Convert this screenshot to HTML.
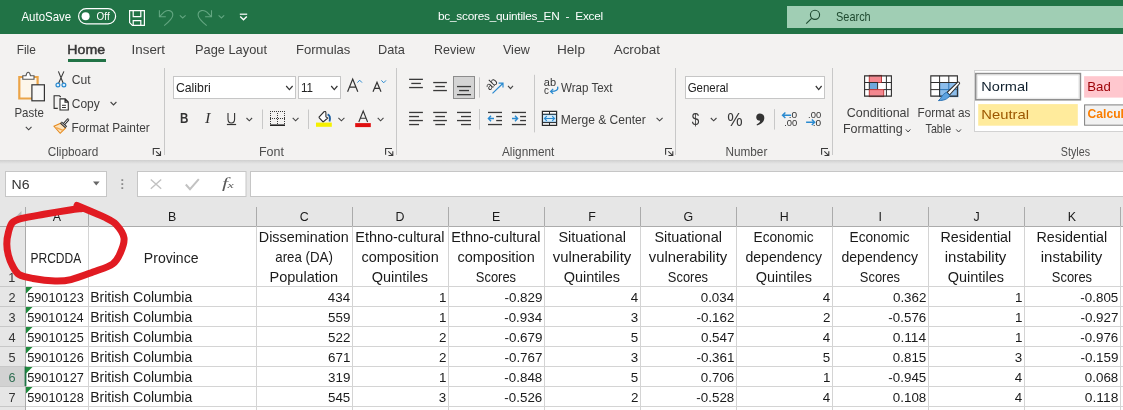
<!DOCTYPE html>
<html><head><meta charset="utf-8"><title>Excel</title>
<style>html,body{margin:0;padding:0;width:1123px;height:410px;overflow:hidden;background:#fff}
svg{display:block;will-change:transform;font-family:"Liberation Sans",sans-serif}
text{white-space:pre}</style></head>
<body><svg width="1123" height="410" viewBox="0 0 1123 410">
<rect x="0" y="0" width="1123" height="34" fill="#217346" />
<rect x="0" y="34" width="1123" height="126" fill="#F3F2F1" />
<rect x="0" y="160" width="1123" height="250" fill="#E6E6E6" />
<defs><linearGradient id="sh" x1="0" y1="0" x2="0" y2="1"><stop offset="0" stop-color="#cfcfcf"/><stop offset="1" stop-color="#e6e6e6"/></linearGradient></defs>
<rect x="0" y="160" width="1123" height="4" fill="url(#sh)" />
<text x="21.40" y="21.2" font-size="12.6" fill="#fff" textLength="49.82" lengthAdjust="spacingAndGlyphs" >AutoSave</text>
<rect x="78.6" y="8.6" width="37" height="15.2" rx="7.6" fill="none" stroke="#fff" stroke-width="1.2"/>
<circle cx="85.6" cy="16.2" r="4" fill="#fff"/>
<text x="96.60" y="19.9" font-size="10.2" fill="#fff" textLength="13.08" lengthAdjust="spacingAndGlyphs" >Off</text>
<path d="M129.6 10.6 H144.4 V25.4 H132.4 L129.6 22.6 Z" stroke="#fff" stroke-width="1.2" fill="none" />
<path d="M133.2 10.6 V16.6 H140.8 V10.6" stroke="#fff" stroke-width="1.2" fill="none" />
<path d="M133.2 25.4 V20.6 H140.8 V25.4" stroke="#fff" stroke-width="1.2" fill="none" />
<path d="M159.4 10.2 V16.8 H165.8 M159.8 16.4 L164 12.2 C167 9.3 172.8 10 172.8 15 C172.8 18.5 168 22.5 164.2 25.6" stroke="#63a681" stroke-width="1.1" fill="none" />
<path d="M179.8 15.4 L182.7 18 L185.6 15.4" stroke="#63a681" stroke-width="1.1" fill="none" />
<path d="M211.5 10.2 V16.8 H205.1 M211.1 16.4 L206.9 12.2 C203.9 9.3 198.1 10 198.1 15 C198.1 18.5 202.9 22.5 206.7 25.6" stroke="#63a681" stroke-width="1.1" fill="none" />
<path d="M218.6 15.4 L221.4 18 L224.2 15.4" stroke="#63a681" stroke-width="1.1" fill="none" />
<line x1="239.8" y1="14.2" x2="247.2" y2="14.2" stroke="#fff" stroke-width="1.2" />
<path d="M240.2 16.6 L243.5 19.8 L246.8 16.6" stroke="#fff" stroke-width="1.4" fill="none" />
<text x="437.99" y="20.0" font-size="11.8" fill="#fff" textLength="165.24" lengthAdjust="spacing" >bc_scores_quintiles_EN  -  Excel</text>
<rect x="787" y="6" width="336" height="22" fill="#A0CEB4" />
<circle cx="815" cy="14.8" r="4.6" fill="none" stroke="#1f4a30" stroke-width="1.1"/>
<line x1="811.6" y1="18.3" x2="806.2" y2="23.7" stroke="#1f4a30" stroke-width="1.1" />
<text x="836.06" y="20.8" font-size="12.6" fill="#1f4a30" textLength="34.65" lengthAdjust="spacingAndGlyphs" >Search</text>
<text x="16.65" y="53.8" font-size="12.6" fill="#404040" textLength="19.18" lengthAdjust="spacingAndGlyphs" >File</text>
<text x="131.60" y="53.8" font-size="12.6" fill="#404040" textLength="33.37" lengthAdjust="spacingAndGlyphs" >Insert</text>
<text x="194.97" y="53.8" font-size="12.6" fill="#404040" textLength="72.00" lengthAdjust="spacingAndGlyphs" >Page Layout</text>
<text x="295.96" y="53.8" font-size="12.6" fill="#404040" textLength="54.44" lengthAdjust="spacingAndGlyphs" >Formulas</text>
<text x="377.98" y="53.8" font-size="12.6" fill="#404040" textLength="26.97" lengthAdjust="spacingAndGlyphs" >Data</text>
<text x="434.00" y="53.8" font-size="12.6" fill="#404040" textLength="40.90" lengthAdjust="spacingAndGlyphs" >Review</text>
<text x="503.00" y="53.8" font-size="12.6" fill="#404040" textLength="26.90" lengthAdjust="spacingAndGlyphs" >View</text>
<text x="556.91" y="53.8" font-size="12.6" fill="#404040" textLength="28.09" lengthAdjust="spacingAndGlyphs" >Help</text>
<text x="613.70" y="53.8" font-size="12.6" fill="#404040" textLength="46.27" lengthAdjust="spacingAndGlyphs" >Acrobat</text>
<text x="67.37" y="53.8" font-size="12.6" fill="#383838" textLength="37.74" lengthAdjust="spacingAndGlyphs" stroke="#383838" stroke-width="0.45">Home</text>
<rect x="68" y="59" width="38" height="3" fill="#217346" />
<line x1="164.5" y1="68" x2="164.5" y2="155" stroke="#c8c8c8" stroke-width="1" />
<line x1="396.5" y1="68" x2="396.5" y2="155" stroke="#c8c8c8" stroke-width="1" />
<line x1="675.5" y1="68" x2="675.5" y2="155" stroke="#c8c8c8" stroke-width="1" />
<line x1="832.5" y1="68" x2="832.5" y2="155" stroke="#c8c8c8" stroke-width="1" />
<path d="M153.3 154.7 V148.5 H159.7" stroke="#3a3a3a" stroke-width="1.1" fill="none" />
<path d="M156 151.39999999999998 L160.3 155.29999999999998 M160.5 151.29999999999998 V155.5 H156.2" stroke="#3a3a3a" stroke-width="1.1" fill="none" />
<path d="M385.6 154.7 V148.5 H392.0" stroke="#3a3a3a" stroke-width="1.1" fill="none" />
<path d="M388.3 151.39999999999998 L392.6 155.29999999999998 M392.8 151.29999999999998 V155.5 H388.5" stroke="#3a3a3a" stroke-width="1.1" fill="none" />
<path d="M665.5999999999999 154.7 V148.5 H672.0" stroke="#3a3a3a" stroke-width="1.1" fill="none" />
<path d="M668.3 151.39999999999998 L672.5999999999999 155.29999999999998 M672.8 151.29999999999998 V155.5 H668.5" stroke="#3a3a3a" stroke-width="1.1" fill="none" />
<path d="M821.5999999999999 154.7 V148.5 H828.0" stroke="#3a3a3a" stroke-width="1.1" fill="none" />
<path d="M824.3 151.39999999999998 L828.5999999999999 155.29999999999998 M828.8 151.29999999999998 V155.5 H824.5" stroke="#3a3a3a" stroke-width="1.1" fill="none" />
<text x="47.71" y="156" font-size="12.4" fill="#4e4e4e" textLength="50.55" lengthAdjust="spacingAndGlyphs" >Clipboard</text>
<text x="259.00" y="156" font-size="12.4" fill="#4e4e4e" textLength="24.97" lengthAdjust="spacingAndGlyphs" >Font</text>
<text x="502.00" y="156" font-size="12.4" fill="#4e4e4e" textLength="52.37" lengthAdjust="spacingAndGlyphs" >Alignment</text>
<text x="725.46" y="156" font-size="12.4" fill="#4e4e4e" textLength="41.90" lengthAdjust="spacingAndGlyphs" >Number</text>
<text x="1060.87" y="156" font-size="12.4" fill="#4e4e4e" textLength="29.15" lengthAdjust="spacingAndGlyphs" >Styles</text>
<path d="M19.3 77 H37.6 V98.5 H19.3 Z" stroke="#EBA447" stroke-width="2.2" fill="#FDF6EA" />
<path d="M22.8 79.3 V75.8 H26 C26.5 73.2 27.2 72.3 28.2 72.3 C29.3 72.3 30 73.2 30.5 75.8 H34 V79.3 Z" stroke="#555" stroke-width="1.1" fill="#fff" />
<rect x="31.9" y="84.8" width="12.5" height="16" fill="#F7F7F7" stroke="#333" stroke-width="1.2"/>
<text x="14.48" y="117" font-size="12.4" fill="#3e3e3e" textLength="29.33" lengthAdjust="spacingAndGlyphs" >Paste</text>
<path d="M25.8 126.8 L28.65 129.8 L31.5 126.8" stroke="#444" stroke-width="1.1" fill="none" />
<path d="M58.4 71.4 L63.2 83.3 M63.9 71.4 L58.6 83.3" stroke="#3a3a3a" stroke-width="1.1" fill="none" />
<circle cx="57.9" cy="85" r="1.9" fill="#e3f1fb" stroke="#2a8ad0" stroke-width="1.2"/>
<circle cx="63.9" cy="85" r="1.9" fill="#e3f1fb" stroke="#2a8ad0" stroke-width="1.2"/>
<text x="71.79" y="84" font-size="12.4" fill="#3e3e3e" textLength="18.88" lengthAdjust="spacingAndGlyphs" >Cut</text>
<path d="M57.8 108.4 H54.1 V95.8 H59.4 L60.8 97" stroke="#2e2e2e" stroke-width="1.1" fill="none" />
<path d="M60 98.9 H65.2 L68.3 102 V110 H60 Z M65 98.9 V102.1 H68.3" stroke="#2e2e2e" stroke-width="1.1" fill="#fff" />
<rect x="62" y="104.8" width="3.9" height="1" fill="#333" />
<rect x="62" y="107" width="3.9" height="1" fill="#333" />
<text x="71.80" y="107.8" font-size="12.4" fill="#3e3e3e" textLength="28.00" lengthAdjust="spacingAndGlyphs" >Copy</text>
<path d="M110.6 102 L113.5 105 L116.4 102" stroke="#444" stroke-width="1.1" fill="none" />
<path d="M60.6 123.2 L54 126.3 L60.2 133.3 L65.6 127.9 Z" stroke="#E58A1F" stroke-width="1.1" fill="#FCE3BD" />
<path d="M56.2 127.6 L63 130.4" stroke="#F2A54A" stroke-width="1.4" fill="none" />
<line x1="64" y1="124.2" x2="67.8" y2="119.8" stroke="#333" stroke-width="2.8" stroke-linecap="round"/>
<line x1="64" y1="124.2" x2="67.8" y2="119.8" stroke="#fff" stroke-width="0.9" stroke-linecap="round"/>
<line x1="60.9" y1="122.5" x2="66.2" y2="127.3" stroke="#333" stroke-width="2.8" />
<line x1="61.4" y1="123" x2="65.7" y2="126.8" stroke="#fff" stroke-width="0.8" />
<text x="71.45" y="131.5" font-size="12.4" fill="#3e3e3e" textLength="78.30" lengthAdjust="spacingAndGlyphs" >Format Painter</text>
<rect x="173.5" y="76.5" width="122" height="22" fill="#fff" stroke="#c6c6c6" stroke-width="1"/>
<text x="175.88" y="92.2" font-size="12.6" fill="#222" textLength="34.88" lengthAdjust="spacingAndGlyphs" >Calibri</text>
<path d="M286.2 86 L289.4 89.6 L292.6 86" stroke="#333" stroke-width="1.2" fill="none" />
<rect x="298.5" y="76.5" width="42" height="22" fill="#fff" stroke="#c6c6c6" stroke-width="1"/>
<text x="300.89" y="92.2" font-size="12.6" fill="#222" textLength="12.05" lengthAdjust="spacingAndGlyphs" >11</text>
<path d="M331.2 86 L334.29999999999995 89.6 L337.4 86" stroke="#333" stroke-width="1.2" fill="none" />
<path d="M347.6 91.8 L352.7 79 L357.8 91.8 M349.4 87.2 H356" stroke="#333" stroke-width="1.2" fill="none" />
<path d="M357.4 82.6 L359.7 80.2 L362 82.6" stroke="#2a8ad0" stroke-width="1.0" fill="none" />
<path d="M373 91.8 L377 82.3 L381 91.8 M374.4 88.4 H379.6" stroke="#333" stroke-width="1.2" fill="none" />
<path d="M381.4 80.4 L383.7 82.8 L386 80.4" stroke="#2a8ad0" stroke-width="1.0" fill="none" />
<text x="180.10" y="123" font-size="14" fill="#333" font-weight="700" textLength="8.39" lengthAdjust="spacingAndGlyphs" >B</text>
<text x="205.06" y="123" font-size="14" fill="#333" font-style="italic" font-family="Liberation Serif" textLength="5.46" lengthAdjust="spacingAndGlyphs" >I</text>
<path d="M228 113 V119 C228 121.6 229.6 123 231.3 123 C233 123 234.6 121.6 234.6 119 V113" stroke="#333" stroke-width="1.1" fill="none" />
<rect x="226.9" y="123.9" width="9.2" height="1.2" fill="#333" />
<path d="M246.5 118 L249.3 120.8 L252.1 118" stroke="#444" stroke-width="1.1" fill="none" />
<line x1="262.5" y1="109.5" x2="262.5" y2="129" stroke="#c8c8c8" stroke-width="1" />
<rect x="270" y="111" width="1" height="1" fill="#3a3a3a" />
<rect x="270" y="118" width="1" height="1" fill="#3a3a3a" />
<rect x="272" y="111" width="1" height="1" fill="#3a3a3a" />
<rect x="272" y="118" width="1" height="1" fill="#3a3a3a" />
<rect x="274" y="111" width="1" height="1" fill="#3a3a3a" />
<rect x="274" y="118" width="1" height="1" fill="#3a3a3a" />
<rect x="276" y="111" width="1" height="1" fill="#3a3a3a" />
<rect x="276" y="118" width="1" height="1" fill="#3a3a3a" />
<rect x="278" y="111" width="1" height="1" fill="#3a3a3a" />
<rect x="278" y="118" width="1" height="1" fill="#3a3a3a" />
<rect x="280" y="111" width="1" height="1" fill="#3a3a3a" />
<rect x="280" y="118" width="1" height="1" fill="#3a3a3a" />
<rect x="282" y="111" width="1" height="1" fill="#3a3a3a" />
<rect x="282" y="118" width="1" height="1" fill="#3a3a3a" />
<rect x="284" y="111" width="1" height="1" fill="#3a3a3a" />
<rect x="284" y="118" width="1" height="1" fill="#3a3a3a" />
<rect x="270" y="113" width="1" height="1" fill="#3a3a3a" />
<rect x="284" y="113" width="1" height="1" fill="#3a3a3a" />
<rect x="277" y="113" width="1" height="1" fill="#3a3a3a" />
<rect x="270" y="115" width="1" height="1" fill="#3a3a3a" />
<rect x="284" y="115" width="1" height="1" fill="#3a3a3a" />
<rect x="277" y="115" width="1" height="1" fill="#3a3a3a" />
<rect x="270" y="117" width="1" height="1" fill="#3a3a3a" />
<rect x="284" y="117" width="1" height="1" fill="#3a3a3a" />
<rect x="277" y="117" width="1" height="1" fill="#3a3a3a" />
<rect x="270" y="119" width="1" height="1" fill="#3a3a3a" />
<rect x="284" y="119" width="1" height="1" fill="#3a3a3a" />
<rect x="277" y="119" width="1" height="1" fill="#3a3a3a" />
<rect x="270" y="121" width="1" height="1" fill="#3a3a3a" />
<rect x="284" y="121" width="1" height="1" fill="#3a3a3a" />
<rect x="277" y="121" width="1" height="1" fill="#3a3a3a" />
<rect x="270" y="123" width="1" height="1" fill="#3a3a3a" />
<rect x="284" y="123" width="1" height="1" fill="#3a3a3a" />
<rect x="277" y="123" width="1" height="1" fill="#3a3a3a" />
<rect x="270" y="124.4" width="15" height="1.6" fill="#222" />
<path d="M292.7 117.9 L295.6 120.8 L298.5 117.9" stroke="#444" stroke-width="1.1" fill="none" />
<line x1="308.5" y1="109.5" x2="308.5" y2="129" stroke="#c8c8c8" stroke-width="1" />
<path d="M318.8 117.4 L324 111.8 Q325.7 110.8 325.9 112.8 V116.8 L327.8 118 L323.1 121.9 Z" stroke="#fff" stroke-width="0" fill="#fff" />
<path d="M318.8 117.4 L324 111.8 Q325.7 110.8 325.9 112.8 V116.8 M325.6 116.6 L327.8 118 L323.1 121.9 L318.8 117.4" stroke="#2f2f2f" stroke-width="1.1" fill="none" />
<path d="M327.6 114.4 C329.9 115.4 330.4 118.4 329.5 121.4" stroke="#1f5f9f" stroke-width="1.8" fill="none" />
<rect x="316" y="122.6" width="15.8" height="4.2" fill="#F5F000" />
<path d="M338.4 117.9 L341.4 120.8 L344.4 117.9" stroke="#444" stroke-width="1.1" fill="none" />
<path d="M358.8 122 L363.2 111 L367.6 122 M360.3 118.2 H366.1" stroke="#333" stroke-width="1.1" fill="none" />
<rect x="355.2" y="123.1" width="15.6" height="4" fill="#E01010" />
<path d="M377.7 117.9 L380.6 120.8 L383.5 117.9" stroke="#444" stroke-width="1.1" fill="none" />
<rect x="409.1" y="78.7" width="13.799999999999955" height="1.3" fill="#3a3a3a" />
<rect x="411.3" y="82.80000000000001" width="9.599999999999966" height="1.3" fill="#3a3a3a" />
<rect x="409.1" y="86.9" width="13.799999999999955" height="1.3" fill="#3a3a3a" />
<rect x="433.2" y="81.9" width="13.699999999999989" height="1.3" fill="#3a3a3a" />
<rect x="435.3" y="85.9" width="9.599999999999966" height="1.3" fill="#3a3a3a" />
<rect x="433.2" y="89.9" width="13.699999999999989" height="1.3" fill="#3a3a3a" />
<rect x="453.5" y="76.5" width="21" height="22" fill="#d4d4d4" stroke="#8c8c8c" stroke-width="1"/>
<rect x="457" y="85.9" width="14" height="1.3" fill="#3a3a3a" />
<rect x="459.1" y="89.9" width="9.899999999999977" height="1.3" fill="#3a3a3a" />
<rect x="457" y="94.0" width="14" height="1.3" fill="#3a3a3a" />
<line x1="479.5" y1="77.3" x2="479.5" y2="97.6" stroke="#c8c8c8" stroke-width="1" />
<line x1="479.5" y1="109" x2="479.5" y2="129.6" stroke="#c8c8c8" stroke-width="1" />
<text x="485.57" y="87.8" font-size="11.8" fill="#333" textLength="12.02" lengthAdjust="spacingAndGlyphs" transform="rotate(-45 491.6 84.2)">ab</text>
<path d="M492.5 93.4 L503 83.2 M498.6 83.2 H503 V87.6" stroke="#2a8ad0" stroke-width="1.2" fill="none" />
<path d="M508 85.9 L510.5 88.7 L513 85.9" stroke="#444" stroke-width="1.1" fill="none" />
<line x1="534.5" y1="74.8" x2="534.5" y2="132.4" stroke="#c8c8c8" stroke-width="1" />
<text x="543.86" y="86.2" font-size="10.4" fill="#333" textLength="12.24" lengthAdjust="spacingAndGlyphs" >ab</text>
<text x="543.91" y="93.7" font-size="10.4" fill="#333" textLength="4.89" lengthAdjust="spacingAndGlyphs" >c</text>
<path d="M557.6 86.6 C558.6 90 556 91.5 550.8 91.4 M553.2 88.9 L550.6 91.4 L553.2 93.9" stroke="#2a8ad0" stroke-width="1.3" fill="none" />
<text x="561.00" y="92.2" font-size="12.4" fill="#3e3e3e" textLength="51.58" lengthAdjust="spacingAndGlyphs" >Wrap Text</text>
<rect x="409.1" y="111.80000000000001" width="13.799999999999955" height="1.3" fill="#3a3a3a" />
<rect x="409.1" y="115.9" width="9.899999999999977" height="1.3" fill="#3a3a3a" />
<rect x="409.1" y="119.9" width="13.799999999999955" height="1.3" fill="#3a3a3a" />
<rect x="409.1" y="123.9" width="9.899999999999977" height="1.3" fill="#3a3a3a" />
<rect x="433.2" y="111.80000000000001" width="13.699999999999989" height="1.3" fill="#3a3a3a" />
<rect x="435.3" y="115.9" width="9.699999999999989" height="1.3" fill="#3a3a3a" />
<rect x="433.2" y="119.9" width="13.699999999999989" height="1.3" fill="#3a3a3a" />
<rect x="435.3" y="123.9" width="9.699999999999989" height="1.3" fill="#3a3a3a" />
<rect x="457" y="111.80000000000001" width="14" height="1.3" fill="#3a3a3a" />
<rect x="461" y="115.9" width="10" height="1.3" fill="#3a3a3a" />
<rect x="457" y="119.9" width="14" height="1.3" fill="#3a3a3a" />
<rect x="461" y="123.9" width="10" height="1.3" fill="#3a3a3a" />
<rect x="488" y="111.80000000000001" width="14" height="1.3" fill="#3a3a3a" />
<rect x="496.2" y="115.9" width="5.800000000000011" height="1.3" fill="#3a3a3a" />
<rect x="496.2" y="119.9" width="5.800000000000011" height="1.3" fill="#3a3a3a" />
<rect x="488" y="123.9" width="14" height="1.3" fill="#3a3a3a" />
<path d="M488.6 118.5 H494 M491 115.8 L488.4 118.5 L491 121.2" stroke="#2a8ad0" stroke-width="1.4" fill="none" />
<rect x="511.9" y="111.80000000000001" width="14.100000000000023" height="1.3" fill="#3a3a3a" />
<rect x="520.1" y="115.9" width="5.899999999999977" height="1.3" fill="#3a3a3a" />
<rect x="520.1" y="119.9" width="5.899999999999977" height="1.3" fill="#3a3a3a" />
<rect x="511.9" y="123.9" width="14.100000000000023" height="1.3" fill="#3a3a3a" />
<path d="M512 118.5 H517.6 M515 115.8 L517.6 118.5 L515 121.2" stroke="#2a8ad0" stroke-width="1.4" fill="none" />
<rect x="542.6" y="111.6" width="13.8" height="13.8" fill="#fff" />
<rect x="542.6" y="114.6" width="13.8" height="7.6" fill="#d6ecfa" stroke="#2a8ad0" stroke-width="0.9"/>
<path d="M542.4 111.4 H556.6 V125.4 H542.4 Z" stroke="#2b2b2b" stroke-width="1.2" fill="none" />
<line x1="542.4" y1="114.2" x2="556.6" y2="114.2" stroke="#2b2b2b" stroke-width="1.0" />
<line x1="542.4" y1="122.6" x2="556.6" y2="122.6" stroke="#2b2b2b" stroke-width="1.0" />
<line x1="549.5" y1="111.4" x2="549.5" y2="114.2" stroke="#2b2b2b" stroke-width="1.0" />
<line x1="549.5" y1="122.6" x2="549.5" y2="125.4" stroke="#2b2b2b" stroke-width="1.0" />
<path d="M544.5 118.5 H554.5 M546.8 116.2 L544.5 118.5 L546.8 120.8 M552.2 116.2 L554.5 118.5 L552.2 120.8" stroke="#2a8ad0" stroke-width="1.2" fill="none" />
<text x="560.74" y="124.4" font-size="12.4" fill="#3e3e3e" textLength="85.02" lengthAdjust="spacingAndGlyphs" >Merge &amp; Center</text>
<path d="M656.6 117.8 L659.6 120.8 L662.6 117.8" stroke="#444" stroke-width="1.1" fill="none" />
<rect x="685.5" y="76.5" width="139" height="22" fill="#fff" stroke="#c6c6c6" stroke-width="1"/>
<text x="687.63" y="92.2" font-size="12.6" fill="#222" textLength="40.79" lengthAdjust="spacingAndGlyphs" >General</text>
<path d="M815.8 86 L818.7 89.6 L821.6 86" stroke="#333" stroke-width="1.2" fill="none" />
<text x="691.86" y="124.6" font-size="17" fill="#3a3a3a" textLength="7.56" lengthAdjust="spacingAndGlyphs" >$</text>
<path d="M710.8 118 L713.65 120.8 L716.5 118" stroke="#444" stroke-width="1.1" fill="none" />
<text x="727.18" y="125.8" font-size="19" fill="#3a3a3a" textLength="15.43" lengthAdjust="spacingAndGlyphs" >%</text>
<path d="M759.8 113.4 C762.8 113.4 764.4 115.5 764.3 118.3 C764.2 121.8 761.5 124.4 757 125.4 L756.6 124.4 C758.8 123.4 760 122 760.2 120.8 C758 120.8 756.2 119.5 756.2 117.2 C756.2 115 757.8 113.4 759.8 113.4 Z" stroke="none" stroke-width="1" fill="#333" />
<line x1="774.5" y1="109.1" x2="774.5" y2="129.6" stroke="#c8c8c8" stroke-width="1" />
<path d="M791.1 115.3 H782.6 M785.4 112.6 L782.5 115.3 L785.4 118" stroke="#2a8ad0" stroke-width="1.4" fill="none" />
<text x="788.78" y="117.7" font-size="9.4" fill="#333" textLength="8.48" lengthAdjust="spacingAndGlyphs" >.0</text>
<text x="784.15" y="125.8" font-size="9.4" fill="#333" textLength="13.09" lengthAdjust="spacingAndGlyphs" >.00</text>
<text x="808.05" y="117.7" font-size="9.4" fill="#333" textLength="13.09" lengthAdjust="spacingAndGlyphs" >.00</text>
<path d="M806.1 122.3 H814.6 M811.8 119.6 L814.7 122.3 L811.8 125" stroke="#2a8ad0" stroke-width="1.4" fill="none" />
<text x="812.68" y="125.8" font-size="9.4" fill="#333" textLength="8.48" lengthAdjust="spacingAndGlyphs" >.0</text>
<rect x="864.6" y="75.9" width="26.8" height="20.2" fill="#fff" />
<rect x="869.3" y="75.4" width="12.2" height="7.1" fill="#F4878F" stroke="#c23b3b" stroke-width="1"/>
<rect x="869.3" y="82.5" width="8.3" height="7.1" fill="#6FA8DC" stroke="#2e2e2e" stroke-width="1"/>
<rect x="869.3" y="89.6" width="14.4" height="7.0" fill="#F4878F" stroke="#c23b3b" stroke-width="1"/>
<path d="M864.6 75.9 H891.4 V96.1 H864.6 Z" stroke="#2e2e2e" stroke-width="1.1" fill="none" />
<line x1="886.4" y1="75.9" x2="886.4" y2="96.1" stroke="#2e2e2e" stroke-width="1" />
<line x1="881.5" y1="82.5" x2="891.4" y2="82.5" stroke="#2e2e2e" stroke-width="1" />
<line x1="883.7" y1="89.6" x2="891.4" y2="89.6" stroke="#2e2e2e" stroke-width="1" />
<line x1="864.6" y1="82.5" x2="869.3" y2="82.5" stroke="#2e2e2e" stroke-width="1" />
<line x1="864.6" y1="89.6" x2="869.3" y2="89.6" stroke="#2e2e2e" stroke-width="1" />
<line x1="877.6" y1="82.5" x2="881.5" y2="82.5" stroke="#2e2e2e" stroke-width="0" />
<text x="846.77" y="116.9" font-size="12.4" fill="#3e3e3e" textLength="62.60" lengthAdjust="spacingAndGlyphs" >Conditional</text>
<text x="842.90" y="133.0" font-size="12.4" fill="#3e3e3e" textLength="59.80" lengthAdjust="spacingAndGlyphs" >Formatting</text>
<path d="M905.8 129.4 L908.0999999999999 132 L910.4 129.4" stroke="#444" stroke-width="1" fill="none" />
<rect x="930.8" y="75.9" width="26.6" height="20.2" fill="#fff" />
<rect x="939.6" y="82.5" width="18.3" height="14.1" fill="#8CBDEB" stroke="#2E75B6" stroke-width="1"/>
<line x1="948.8" y1="82.5" x2="948.8" y2="96.1" stroke="#2E75B6" stroke-width="1" />
<line x1="939.6" y1="89.6" x2="957.4" y2="89.6" stroke="#2E75B6" stroke-width="1" />
<path d="M930.8 75.9 H957.4 V96.1 H930.8 Z" stroke="#2e2e2e" stroke-width="1.1" fill="none" />
<line x1="939.6" y1="75.9" x2="939.6" y2="96.1" stroke="#2e2e2e" stroke-width="1" />
<line x1="948.8" y1="75.9" x2="948.8" y2="82.5" stroke="#2e2e2e" stroke-width="1" />
<line x1="930.8" y1="82.5" x2="957.4" y2="82.5" stroke="#2e2e2e" stroke-width="1" />
<line x1="930.8" y1="89.6" x2="939.6" y2="89.6" stroke="#2e2e2e" stroke-width="1" />
<path d="M947 92.5 L957.5 82.4 C958.7 81.4 960.3 82.8 959.3 84 L949.5 95 Z" stroke="#333" stroke-width="1.1" fill="#fff" />
<path d="M946.3 92.3 L949.8 95.6 C947.5 99.5 943.5 100.5 938.4 100.6 C941.5 98.5 941.8 94.6 946.3 92.3 Z" stroke="#2E75B6" stroke-width="1" fill="#5DA2E0" />
<text x="917.56" y="116.9" font-size="12.4" fill="#3e3e3e" textLength="52.79" lengthAdjust="spacingAndGlyphs" >Format as</text>
<text x="925.59" y="133.0" font-size="12.4" fill="#3e3e3e" textLength="25.50" lengthAdjust="spacingAndGlyphs" >Table</text>
<path d="M956.2 129.4 L958.6 132 L961 129.4" stroke="#444" stroke-width="1" fill="none" />
<rect x="974.5" y="70.5" width="160" height="61" fill="#fff" stroke="#d2d2d2" stroke-width="1"/>
<rect x="975.8" y="73.6" width="104.6" height="26.2" fill="#fff" stroke="#8f8f8f" stroke-width="1.6"/>
<rect x="977.3" y="75.1" width="101.6" height="23.2" fill="#fff" stroke="#e6e6e6" stroke-width="1"/>
<text x="981.33" y="90.8" font-size="13.6" fill="#10202e" textLength="46.97" lengthAdjust="spacingAndGlyphs" >Normal</text>
<rect x="1084.1" y="76.2" width="40" height="21.4" fill="#FFC7CE" />
<text x="1087.24" y="90.8" font-size="13.6" fill="#9C0006" textLength="23.50" lengthAdjust="spacingAndGlyphs" >Bad</text>
<rect x="978.2" y="104.1" width="99.6" height="21.6" fill="#FFEB9C" />
<text x="981.32" y="118.9" font-size="13.6" fill="#9C5700" textLength="47.70" lengthAdjust="spacingAndGlyphs" >Neutral</text>
<rect x="1084.6" y="104.9" width="40" height="20.3" fill="#F2F2F2" stroke="#7F7F7F" stroke-width="1"/>
<text x="1087.51" y="117.9" font-size="12.8" fill="#FA7D00" font-weight="700" textLength="36.41" lengthAdjust="spacingAndGlyphs" >Calcul</text>
<rect x="5.5" y="171.5" width="101" height="25" fill="#fff" stroke="#c6c6c6" stroke-width="1"/>
<text x="11.47" y="189" font-size="12.6" fill="#333" textLength="18.04" lengthAdjust="spacingAndGlyphs" >N6</text>
<path d="M93 181.6 H99.6 L96.3 185.4 Z" stroke="none" stroke-width="1" fill="#666" />
<rect x="121.4" y="179.2" width="1.8" height="1.8" fill="#8a8a8a" />
<rect x="121.4" y="183.2" width="1.8" height="1.8" fill="#8a8a8a" />
<rect x="121.4" y="187.2" width="1.8" height="1.8" fill="#8a8a8a" />
<rect x="137.5" y="171.5" width="108.5" height="25" fill="#fff" stroke="#c6c6c6" stroke-width="1"/>
<path d="M150.8 179.4 L161.2 188.8 M161.2 179.4 L150.8 188.8" stroke="#c2c2c2" stroke-width="1.4" fill="none" />
<path d="M185.8 184.5 L190 189.2 L198.8 179.2" stroke="#c2c2c2" stroke-width="2" fill="none" />
<text x="221.98" y="187.5" font-size="14" fill="#5a5a5a" font-style="italic" font-family="Liberation Serif" textLength="6.13" lengthAdjust="spacingAndGlyphs" >f</text>
<text x="227.48" y="187.5" font-size="9" fill="#5a5a5a" font-style="italic" font-family="Liberation Serif" textLength="6.27" lengthAdjust="spacingAndGlyphs" >x</text>
<rect x="250.5" y="171.5" width="880" height="25" fill="#fff" stroke="#c6c6c6" stroke-width="1"/>
<rect x="25.5" y="226.5" width="1100" height="184" fill="#fff" />
<text x="52.65" y="220.6" font-size="12.4" fill="#1a1a1a" >A</text>
<text x="167.96" y="220.6" font-size="12.4" fill="#1a1a1a" >B</text>
<text x="299.71" y="220.6" font-size="12.4" fill="#1a1a1a" >C</text>
<text x="395.59" y="220.6" font-size="12.4" fill="#1a1a1a" >D</text>
<text x="491.90" y="220.6" font-size="12.4" fill="#1a1a1a" >E</text>
<text x="588.21" y="220.6" font-size="12.4" fill="#1a1a1a" >F</text>
<text x="683.59" y="220.6" font-size="12.4" fill="#1a1a1a" >G</text>
<text x="779.77" y="220.6" font-size="12.4" fill="#1a1a1a" >H</text>
<text x="878.56" y="220.6" font-size="12.4" fill="#1a1a1a" >I</text>
<text x="973.57" y="220.6" font-size="12.4" fill="#1a1a1a" >J</text>
<text x="1067.71" y="220.6" font-size="12.4" fill="#1a1a1a" >K</text>
<line x1="25.5" y1="207" x2="25.5" y2="226" stroke="#ababab" stroke-width="1" />
<line x1="88.5" y1="207" x2="88.5" y2="226" stroke="#ababab" stroke-width="1" />
<line x1="256.5" y1="207" x2="256.5" y2="226" stroke="#ababab" stroke-width="1" />
<line x1="352.5" y1="207" x2="352.5" y2="226" stroke="#ababab" stroke-width="1" />
<line x1="448.5" y1="207" x2="448.5" y2="226" stroke="#ababab" stroke-width="1" />
<line x1="544.5" y1="207" x2="544.5" y2="226" stroke="#ababab" stroke-width="1" />
<line x1="640.5" y1="207" x2="640.5" y2="226" stroke="#ababab" stroke-width="1" />
<line x1="736.5" y1="207" x2="736.5" y2="226" stroke="#ababab" stroke-width="1" />
<line x1="832.5" y1="207" x2="832.5" y2="226" stroke="#ababab" stroke-width="1" />
<line x1="928.5" y1="207" x2="928.5" y2="226" stroke="#ababab" stroke-width="1" />
<line x1="1024.5" y1="207" x2="1024.5" y2="226" stroke="#ababab" stroke-width="1" />
<line x1="1120.5" y1="207" x2="1120.5" y2="226" stroke="#ababab" stroke-width="1" />
<line x1="0" y1="226.5" x2="1123" y2="226.5" stroke="#ababab" stroke-width="1" />
<path d="M21.5 211 V222 H10.5 Z" stroke="none" stroke-width="1" fill="#b8b8b8" />
<rect x="0" y="366" width="25" height="20" fill="#d2d2d2" />
<line x1="0" y1="286.5" x2="25" y2="286.5" stroke="#c8c8c8" stroke-width="1" />
<line x1="0" y1="306.5" x2="25" y2="306.5" stroke="#c8c8c8" stroke-width="1" />
<line x1="0" y1="326.5" x2="25" y2="326.5" stroke="#c8c8c8" stroke-width="1" />
<line x1="0" y1="346.5" x2="25" y2="346.5" stroke="#c8c8c8" stroke-width="1" />
<line x1="0" y1="366.5" x2="25" y2="366.5" stroke="#c8c8c8" stroke-width="1" />
<line x1="0" y1="386.5" x2="25" y2="386.5" stroke="#c8c8c8" stroke-width="1" />
<line x1="0" y1="406.5" x2="25" y2="406.5" stroke="#c8c8c8" stroke-width="1" />
<line x1="25.5" y1="286.5" x2="1123" y2="286.5" stroke="#d4d4d4" stroke-width="1" />
<line x1="25.5" y1="306.5" x2="1123" y2="306.5" stroke="#d4d4d4" stroke-width="1" />
<line x1="25.5" y1="326.5" x2="1123" y2="326.5" stroke="#d4d4d4" stroke-width="1" />
<line x1="25.5" y1="346.5" x2="1123" y2="346.5" stroke="#d4d4d4" stroke-width="1" />
<line x1="25.5" y1="366.5" x2="1123" y2="366.5" stroke="#d4d4d4" stroke-width="1" />
<line x1="25.5" y1="386.5" x2="1123" y2="386.5" stroke="#d4d4d4" stroke-width="1" />
<line x1="25.5" y1="406.5" x2="1123" y2="406.5" stroke="#d4d4d4" stroke-width="1" />
<line x1="88.5" y1="226.5" x2="88.5" y2="410" stroke="#d4d4d4" stroke-width="1" />
<line x1="256.5" y1="226.5" x2="256.5" y2="410" stroke="#d4d4d4" stroke-width="1" />
<line x1="352.5" y1="226.5" x2="352.5" y2="410" stroke="#d4d4d4" stroke-width="1" />
<line x1="448.5" y1="226.5" x2="448.5" y2="410" stroke="#d4d4d4" stroke-width="1" />
<line x1="544.5" y1="226.5" x2="544.5" y2="410" stroke="#d4d4d4" stroke-width="1" />
<line x1="640.5" y1="226.5" x2="640.5" y2="410" stroke="#d4d4d4" stroke-width="1" />
<line x1="736.5" y1="226.5" x2="736.5" y2="410" stroke="#d4d4d4" stroke-width="1" />
<line x1="832.5" y1="226.5" x2="832.5" y2="410" stroke="#d4d4d4" stroke-width="1" />
<line x1="928.5" y1="226.5" x2="928.5" y2="410" stroke="#d4d4d4" stroke-width="1" />
<line x1="1024.5" y1="226.5" x2="1024.5" y2="410" stroke="#d4d4d4" stroke-width="1" />
<line x1="1120.5" y1="226.5" x2="1120.5" y2="410" stroke="#d4d4d4" stroke-width="1" />
<line x1="25.5" y1="226" x2="25.5" y2="410" stroke="#ababab" stroke-width="1" />
<rect x="24.6" y="366.5" width="1.8" height="19.6" fill="#217346" />
<text x="8.32" y="281.6" font-size="12.7" fill="#333" >1</text>
<text x="8.44" y="301.8" font-size="12.7" fill="#333" >2</text>
<text x="8.51" y="321.8" font-size="12.7" fill="#333" >3</text>
<text x="8.51" y="341.8" font-size="12.7" fill="#333" >4</text>
<text x="8.44" y="361.8" font-size="12.7" fill="#333" >5</text>
<text x="8.38" y="381.8" font-size="12.7" fill="#2f6e52" >6</text>
<text x="8.44" y="401.8" font-size="12.7" fill="#333" >7</text>
<text x="30.44" y="262.5" font-size="13.8" fill="#222" textLength="50.83" lengthAdjust="spacingAndGlyphs" >PRCDDA</text>
<text x="143.88" y="262.5" font-size="14" fill="#222" textLength="54.63" lengthAdjust="spacingAndGlyphs" >Province</text>
<text x="258.85" y="242.2" font-size="14.2" fill="#1a1a1a" textLength="89.95" lengthAdjust="spacingAndGlyphs" >Dissemination</text>
<text x="275.27" y="262.0" font-size="14.2" fill="#1a1a1a" textLength="57.64" lengthAdjust="spacingAndGlyphs" >area (DA)</text>
<text x="269.49" y="281.8" font-size="14.2" fill="#1a1a1a" textLength="68.68" lengthAdjust="spacingAndGlyphs" >Population</text>
<text x="355.24" y="242.2" font-size="14.2" fill="#1a1a1a" textLength="89.26" lengthAdjust="spacingAndGlyphs" >Ethno-cultural</text>
<text x="361.52" y="262.0" font-size="14.2" fill="#1a1a1a" textLength="77.19" lengthAdjust="spacingAndGlyphs" >composition</text>
<text x="371.77" y="281.8" font-size="14.2" fill="#1a1a1a" textLength="56.31" lengthAdjust="spacingAndGlyphs" >Quintiles</text>
<text x="451.24" y="242.2" font-size="14.2" fill="#1a1a1a" textLength="89.26" lengthAdjust="spacingAndGlyphs" >Ethno-cultural</text>
<text x="457.52" y="262.0" font-size="14.2" fill="#1a1a1a" textLength="77.19" lengthAdjust="spacingAndGlyphs" >composition</text>
<text x="475.83" y="281.8" font-size="14.2" fill="#1a1a1a" textLength="40.20" lengthAdjust="spacingAndGlyphs" >Scores</text>
<text x="558.42" y="242.2" font-size="14.2" fill="#1a1a1a" textLength="67.48" lengthAdjust="spacingAndGlyphs" >Situational</text>
<text x="552.80" y="262.0" font-size="14.2" fill="#1a1a1a" textLength="78.40" lengthAdjust="spacingAndGlyphs" >vulnerability</text>
<text x="563.77" y="281.8" font-size="14.2" fill="#1a1a1a" textLength="56.31" lengthAdjust="spacingAndGlyphs" >Quintiles</text>
<text x="654.42" y="242.2" font-size="14.2" fill="#1a1a1a" textLength="67.48" lengthAdjust="spacingAndGlyphs" >Situational</text>
<text x="648.80" y="262.0" font-size="14.2" fill="#1a1a1a" textLength="78.40" lengthAdjust="spacingAndGlyphs" >vulnerability</text>
<text x="667.83" y="281.8" font-size="14.2" fill="#1a1a1a" textLength="40.20" lengthAdjust="spacingAndGlyphs" >Scores</text>
<text x="753.50" y="242.2" font-size="14.2" fill="#1a1a1a" textLength="60.17" lengthAdjust="spacingAndGlyphs" >Economic</text>
<text x="745.44" y="262.0" font-size="14.2" fill="#1a1a1a" textLength="76.56" lengthAdjust="spacingAndGlyphs" >dependency</text>
<text x="755.77" y="281.8" font-size="14.2" fill="#1a1a1a" textLength="56.31" lengthAdjust="spacingAndGlyphs" >Quintiles</text>
<text x="849.50" y="242.2" font-size="14.2" fill="#1a1a1a" textLength="60.17" lengthAdjust="spacingAndGlyphs" >Economic</text>
<text x="841.44" y="262.0" font-size="14.2" fill="#1a1a1a" textLength="76.56" lengthAdjust="spacingAndGlyphs" >dependency</text>
<text x="859.83" y="281.8" font-size="14.2" fill="#1a1a1a" textLength="40.20" lengthAdjust="spacingAndGlyphs" >Scores</text>
<text x="940.45" y="242.2" font-size="14.2" fill="#1a1a1a" textLength="70.84" lengthAdjust="spacingAndGlyphs" >Residential</text>
<text x="944.80" y="262.0" font-size="14.2" fill="#1a1a1a" textLength="61.50" lengthAdjust="spacingAndGlyphs" >instability</text>
<text x="947.77" y="281.8" font-size="14.2" fill="#1a1a1a" textLength="56.31" lengthAdjust="spacingAndGlyphs" >Quintiles</text>
<text x="1036.45" y="242.2" font-size="14.2" fill="#1a1a1a" textLength="70.84" lengthAdjust="spacingAndGlyphs" >Residential</text>
<text x="1040.80" y="262.0" font-size="14.2" fill="#1a1a1a" textLength="61.50" lengthAdjust="spacingAndGlyphs" >instability</text>
<text x="1051.83" y="281.8" font-size="14.2" fill="#1a1a1a" textLength="40.20" lengthAdjust="spacingAndGlyphs" >Scores</text>
<path d="M26 287 H32.5 L26 293.5 Z" stroke="none" stroke-width="1" fill="#1e8a3c" />
<text x="27.19" y="301.8" font-size="12.7" fill="#1a1a1a" textLength="56.57" lengthAdjust="spacingAndGlyphs" >59010123</text>
<text x="90.18" y="301.8" font-size="14.0" fill="#1a1a1a" textLength="102.07" lengthAdjust="spacingAndGlyphs" >British Columbia</text>
<text x="327.84" y="301.8" font-size="12.7" fill="#1a1a1a" textLength="22.31" lengthAdjust="spacingAndGlyphs" >434</text>
<text x="438.98" y="301.8" font-size="12.7" fill="#1a1a1a" textLength="7.44" lengthAdjust="spacingAndGlyphs" >1</text>
<text x="504.49" y="301.8" font-size="12.7" fill="#1a1a1a" textLength="37.93" lengthAdjust="spacingAndGlyphs" >-0.829</text>
<text x="630.71" y="301.8" font-size="12.7" fill="#1a1a1a" textLength="7.44" lengthAdjust="spacingAndGlyphs" >4</text>
<text x="700.71" y="301.8" font-size="12.7" fill="#1a1a1a" textLength="33.44" lengthAdjust="spacingAndGlyphs" >0.034</text>
<text x="822.71" y="301.8" font-size="12.7" fill="#1a1a1a" textLength="7.44" lengthAdjust="spacingAndGlyphs" >4</text>
<text x="892.98" y="301.8" font-size="12.7" fill="#1a1a1a" textLength="33.44" lengthAdjust="spacingAndGlyphs" >0.362</text>
<text x="1014.98" y="301.8" font-size="12.7" fill="#1a1a1a" textLength="7.44" lengthAdjust="spacingAndGlyphs" >1</text>
<text x="1080.35" y="301.8" font-size="12.7" fill="#1a1a1a" textLength="37.93" lengthAdjust="spacingAndGlyphs" >-0.805</text>
<path d="M26 307 H32.5 L26 313.5 Z" stroke="none" stroke-width="1" fill="#1e8a3c" />
<text x="27.19" y="321.8" font-size="12.7" fill="#1a1a1a" textLength="56.44" lengthAdjust="spacingAndGlyphs" >59010124</text>
<text x="90.18" y="321.8" font-size="14.0" fill="#1a1a1a" textLength="102.07" lengthAdjust="spacingAndGlyphs" >British Columbia</text>
<text x="328.11" y="321.8" font-size="12.7" fill="#1a1a1a" textLength="22.31" lengthAdjust="spacingAndGlyphs" >559</text>
<text x="438.98" y="321.8" font-size="12.7" fill="#1a1a1a" textLength="7.44" lengthAdjust="spacingAndGlyphs" >1</text>
<text x="504.22" y="321.8" font-size="12.7" fill="#1a1a1a" textLength="37.93" lengthAdjust="spacingAndGlyphs" >-0.934</text>
<text x="630.85" y="321.8" font-size="12.7" fill="#1a1a1a" textLength="7.44" lengthAdjust="spacingAndGlyphs" >3</text>
<text x="696.49" y="321.8" font-size="12.7" fill="#1a1a1a" textLength="37.93" lengthAdjust="spacingAndGlyphs" >-0.162</text>
<text x="822.98" y="321.8" font-size="12.7" fill="#1a1a1a" textLength="7.44" lengthAdjust="spacingAndGlyphs" >2</text>
<text x="888.35" y="321.8" font-size="12.7" fill="#1a1a1a" textLength="37.93" lengthAdjust="spacingAndGlyphs" >-0.576</text>
<text x="1014.98" y="321.8" font-size="12.7" fill="#1a1a1a" textLength="7.44" lengthAdjust="spacingAndGlyphs" >1</text>
<text x="1080.49" y="321.8" font-size="12.7" fill="#1a1a1a" textLength="37.93" lengthAdjust="spacingAndGlyphs" >-0.927</text>
<path d="M26 327 H32.5 L26 333.5 Z" stroke="none" stroke-width="1" fill="#1e8a3c" />
<text x="27.19" y="341.8" font-size="12.7" fill="#1a1a1a" textLength="56.57" lengthAdjust="spacingAndGlyphs" >59010125</text>
<text x="90.18" y="341.8" font-size="14.0" fill="#1a1a1a" textLength="102.07" lengthAdjust="spacingAndGlyphs" >British Columbia</text>
<text x="328.11" y="341.8" font-size="12.7" fill="#1a1a1a" textLength="22.31" lengthAdjust="spacingAndGlyphs" >522</text>
<text x="438.98" y="341.8" font-size="12.7" fill="#1a1a1a" textLength="7.44" lengthAdjust="spacingAndGlyphs" >2</text>
<text x="504.49" y="341.8" font-size="12.7" fill="#1a1a1a" textLength="37.93" lengthAdjust="spacingAndGlyphs" >-0.679</text>
<text x="630.85" y="341.8" font-size="12.7" fill="#1a1a1a" textLength="7.44" lengthAdjust="spacingAndGlyphs" >5</text>
<text x="700.98" y="341.8" font-size="12.7" fill="#1a1a1a" textLength="33.44" lengthAdjust="spacingAndGlyphs" >0.547</text>
<text x="822.71" y="341.8" font-size="12.7" fill="#1a1a1a" textLength="7.44" lengthAdjust="spacingAndGlyphs" >4</text>
<text x="892.72" y="341.8" font-size="12.7" fill="#1a1a1a" textLength="33.44" lengthAdjust="spacingAndGlyphs" >0.114</text>
<text x="1014.98" y="341.8" font-size="12.7" fill="#1a1a1a" textLength="7.44" lengthAdjust="spacingAndGlyphs" >1</text>
<text x="1080.35" y="341.8" font-size="12.7" fill="#1a1a1a" textLength="37.93" lengthAdjust="spacingAndGlyphs" >-0.976</text>
<path d="M26 347 H32.5 L26 353.5 Z" stroke="none" stroke-width="1" fill="#1e8a3c" />
<text x="27.19" y="361.8" font-size="12.7" fill="#1a1a1a" textLength="56.57" lengthAdjust="spacingAndGlyphs" >59010126</text>
<text x="90.18" y="361.8" font-size="14.0" fill="#1a1a1a" textLength="102.07" lengthAdjust="spacingAndGlyphs" >British Columbia</text>
<text x="328.11" y="361.8" font-size="12.7" fill="#1a1a1a" textLength="22.31" lengthAdjust="spacingAndGlyphs" >671</text>
<text x="438.98" y="361.8" font-size="12.7" fill="#1a1a1a" textLength="7.44" lengthAdjust="spacingAndGlyphs" >2</text>
<text x="504.49" y="361.8" font-size="12.7" fill="#1a1a1a" textLength="37.93" lengthAdjust="spacingAndGlyphs" >-0.767</text>
<text x="630.85" y="361.8" font-size="12.7" fill="#1a1a1a" textLength="7.44" lengthAdjust="spacingAndGlyphs" >3</text>
<text x="696.49" y="361.8" font-size="12.7" fill="#1a1a1a" textLength="37.93" lengthAdjust="spacingAndGlyphs" >-0.361</text>
<text x="822.85" y="361.8" font-size="12.7" fill="#1a1a1a" textLength="7.44" lengthAdjust="spacingAndGlyphs" >5</text>
<text x="892.84" y="361.8" font-size="12.7" fill="#1a1a1a" textLength="33.44" lengthAdjust="spacingAndGlyphs" >0.815</text>
<text x="1014.85" y="361.8" font-size="12.7" fill="#1a1a1a" textLength="7.44" lengthAdjust="spacingAndGlyphs" >3</text>
<text x="1080.49" y="361.8" font-size="12.7" fill="#1a1a1a" textLength="37.93" lengthAdjust="spacingAndGlyphs" >-0.159</text>
<path d="M26 367 H32.5 L26 373.5 Z" stroke="none" stroke-width="1" fill="#1e8a3c" />
<text x="27.19" y="381.8" font-size="12.7" fill="#1a1a1a" textLength="56.70" lengthAdjust="spacingAndGlyphs" >59010127</text>
<text x="90.18" y="381.8" font-size="14.0" fill="#1a1a1a" textLength="102.07" lengthAdjust="spacingAndGlyphs" >British Columbia</text>
<text x="328.11" y="381.8" font-size="12.7" fill="#1a1a1a" textLength="22.31" lengthAdjust="spacingAndGlyphs" >319</text>
<text x="438.98" y="381.8" font-size="12.7" fill="#1a1a1a" textLength="7.44" lengthAdjust="spacingAndGlyphs" >1</text>
<text x="504.35" y="381.8" font-size="12.7" fill="#1a1a1a" textLength="37.93" lengthAdjust="spacingAndGlyphs" >-0.848</text>
<text x="630.85" y="381.8" font-size="12.7" fill="#1a1a1a" textLength="7.44" lengthAdjust="spacingAndGlyphs" >5</text>
<text x="700.84" y="381.8" font-size="12.7" fill="#1a1a1a" textLength="33.44" lengthAdjust="spacingAndGlyphs" >0.706</text>
<text x="822.98" y="381.8" font-size="12.7" fill="#1a1a1a" textLength="7.44" lengthAdjust="spacingAndGlyphs" >1</text>
<text x="888.35" y="381.8" font-size="12.7" fill="#1a1a1a" textLength="37.93" lengthAdjust="spacingAndGlyphs" >-0.945</text>
<text x="1014.71" y="381.8" font-size="12.7" fill="#1a1a1a" textLength="7.44" lengthAdjust="spacingAndGlyphs" >4</text>
<text x="1084.84" y="381.8" font-size="12.7" fill="#1a1a1a" textLength="33.44" lengthAdjust="spacingAndGlyphs" >0.068</text>
<path d="M26 387 H32.5 L26 393.5 Z" stroke="none" stroke-width="1" fill="#1e8a3c" />
<text x="27.19" y="401.8" font-size="12.7" fill="#1a1a1a" textLength="56.57" lengthAdjust="spacingAndGlyphs" >59010128</text>
<text x="90.18" y="401.8" font-size="14.0" fill="#1a1a1a" textLength="102.07" lengthAdjust="spacingAndGlyphs" >British Columbia</text>
<text x="327.98" y="401.8" font-size="12.7" fill="#1a1a1a" textLength="22.31" lengthAdjust="spacingAndGlyphs" >545</text>
<text x="438.85" y="401.8" font-size="12.7" fill="#1a1a1a" textLength="7.44" lengthAdjust="spacingAndGlyphs" >3</text>
<text x="504.35" y="401.8" font-size="12.7" fill="#1a1a1a" textLength="37.93" lengthAdjust="spacingAndGlyphs" >-0.526</text>
<text x="630.98" y="401.8" font-size="12.7" fill="#1a1a1a" textLength="7.44" lengthAdjust="spacingAndGlyphs" >2</text>
<text x="696.35" y="401.8" font-size="12.7" fill="#1a1a1a" textLength="37.93" lengthAdjust="spacingAndGlyphs" >-0.528</text>
<text x="822.71" y="401.8" font-size="12.7" fill="#1a1a1a" textLength="7.44" lengthAdjust="spacingAndGlyphs" >4</text>
<text x="892.84" y="401.8" font-size="12.7" fill="#1a1a1a" textLength="33.44" lengthAdjust="spacingAndGlyphs" >0.108</text>
<text x="1014.71" y="401.8" font-size="12.7" fill="#1a1a1a" textLength="7.44" lengthAdjust="spacingAndGlyphs" >4</text>
<text x="1084.86" y="401.8" font-size="12.7" fill="#1a1a1a" textLength="33.44" lengthAdjust="spacingAndGlyphs" >0.118</text>
<path d="M77 205.5 C79.7 206.6 88.5 210.4 93 212.3 C97.5 214.2 100.2 215.0 104 217 C107.8 219.0 112.7 220.8 116 224.3 C119.3 227.8 123.3 233.2 124 238 C124.7 242.8 122.2 248.7 120.3 253 C118.4 257.3 117.2 260.8 112.7 264 C108.2 267.2 100.0 269.4 93 272 C86.0 274.6 77.3 278.1 71 279.6 C64.7 281.1 61.3 281.2 55 281 C48.7 280.8 39.0 279.6 33 278.5 C27.0 277.4 22.4 276.6 19 274.5 C15.6 272.4 14.3 269.1 12.5 265.8 C10.7 262.6 9.2 258.6 8.3 255 C7.4 251.4 6.8 247.8 6.8 244 C6.8 240.2 7.5 235.6 8.5 232 C9.4 228.4 10.3 224.8 12.5 222.5 C14.7 220.2 16.7 219.8 21.9 218.4 C27.1 217.0 35.9 215.7 43.9 214.3 C51.9 212.9 63.6 211.0 70 210 C76.3 209.0 80.0 208.8 82 208.5" stroke="#E11B22" stroke-width="7" fill="none" stroke-linejoin="round" stroke-linecap="round"/>
</svg></body></html>
